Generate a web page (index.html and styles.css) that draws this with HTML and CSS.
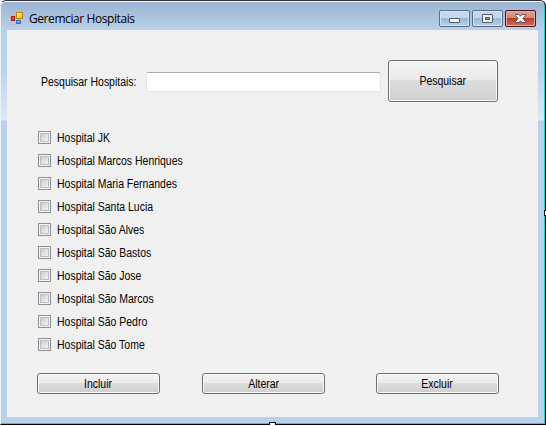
FILE: index.html
```html
<!DOCTYPE html>
<html lang="pt-BR">
<head>
<meta charset="utf-8">
<title>Geremciar Hospitais</title>
<link rel="stylesheet" href="styles.css">
</head>
<body>
<div class="window">
  <header class="titlebar">
    <svg class="app-icon" width="14" height="14" viewBox="0 0 14 14">
      <defs>
        <linearGradient id="y" x2="1" y2="1"><stop stop-color="#fff3a8"/><stop offset="1" stop-color="#efb20c"/></linearGradient>
        <linearGradient id="b" x2="0" y2="1"><stop stop-color="#8fb8f5"/><stop offset="1" stop-color="#3c78d8"/></linearGradient>
      </defs>
      <path d="M5 .5H.5v13H5" fill="none" stroke="#b9bfc8"/>
      <rect x="6.500" y="1.500" width="6" height="6" fill="url(#y)" stroke="#b98510"/>
      <rect x="1.500" y="5.500" width="3" height="4" fill="#e0463a" stroke="#a51c16"/>
      <rect x="6.500" y="9.500" width="4" height="3" fill="url(#b)" stroke="#3f70c0"/>
    </svg>
    <h1 class="title">Geremciar Hospitais</h1>
    <div class="controls">
      <span class="control"><svg width="29" height="15" viewBox="0 0 29 15"><rect x="9.500" y="7.500" width="10" height="4" rx=".5" fill="#f3f3f3" stroke="#50576a"/></svg></span>
      <span class="control"><svg width="29" height="15" viewBox="0 0 29 15"><rect x="9.500" y="3.500" width="10" height="8" rx=".5" fill="#f3f3f3" stroke="#50576a"/><rect x="12.500" y="6.500" width="4" height="2" fill="#8fb0d0" stroke="#50576a"/></svg></span>
      <span class="control close"><svg width="29" height="15" viewBox="0 0 29 15"><path d="M9.500 3.500h3.500l1.500 1.700 1.500-1.700h3.500v1L17 7.500l2.500 3v1H16l-1.500-1.700-1.500 1.700H9.500v-1l2.500-3-2.500-3z" fill="#f5f5f5" stroke="#5b4a5a"/></svg></span>
    </div>
  </header>
  <main class="client">
    <div class="search">
      <label class="search-label" for="q"><span class="text">Pesquisar Hospitais:</span></label>
      <input class="field" id="q" type="text">
      <button class="button large"><span class="text">Pesquisar</span></button>
    </div>
    <div class="list">
      <label class="item"><i class="box"></i><span class="text">Hospital JK</span></label>
      <label class="item"><i class="box"></i><span class="text">Hospital Marcos Henriques</span></label>
      <label class="item"><i class="box"></i><span class="text">Hospital Maria Fernandes</span></label>
      <label class="item"><i class="box"></i><span class="text">Hospital Santa Lucia</span></label>
      <label class="item"><i class="box"></i><span class="text">Hospital São Alves</span></label>
      <label class="item"><i class="box"></i><span class="text">Hospital São Bastos</span></label>
      <label class="item"><i class="box"></i><span class="text">Hospital São Jose</span></label>
      <label class="item"><i class="box"></i><span class="text">Hospital São Marcos</span></label>
      <label class="item"><i class="box"></i><span class="text">Hospital São Pedro</span></label>
      <label class="item"><i class="box"></i><span class="text">Hospital São Tome</span></label>
    </div>
    <div class="actions">
      <button class="button"><span class="text">Incluir</span></button>
      <button class="button"><span class="text">Alterar</span></button>
      <button class="button"><span class="text">Excluir</span></button>
    </div>
  </main>
  <i class="handle right"></i>
  <i class="handle bottom"></i>
</div>
</body>
</html>
```
FILE: styles.css
```css
* { box-sizing: border-box; }
body {
  margin: 0;
  background: #fff;
  font: 12px/15px "Liberation Sans", sans-serif;
  color: #000;
  overflow: hidden;
}
.window {
  position: relative;
  width: 546px;
  height: 425px;
  padding: 0 6px 6px 6px;
  border: 1px solid #000;
  border-left-color: #eef4fa;
  border-top-color: #333;
  border-radius: 6px 6px 0 0;
  background: linear-gradient(#98b3d2, #b9d1ea 29px, #bcd3ec 70px, #dce9f7 119px, #b9d1ea 120px);
  box-shadow: inset -1px -1px #2cc4e4, inset 0 1px #f4f8fc;
}
.titlebar {
  display: flex;
  align-items: center;
  height: 29px;
  padding: 5px 3px 0 3px;
}
.app-icon { margin-bottom: 1px; }
.title {
  margin: 2px 0 0 5px;
  font: 12px/16px "Open Sans", "Noto Sans", sans-serif;
  letter-spacing: -0.42px;
  white-space: nowrap;
}
.controls {
  display: flex;
  gap: 2px;
  margin-left: auto;
}
.control {
  width: 31px;
  height: 17px;
  border: 1px solid #5b6d89;
  border-radius: 2px;
  background: linear-gradient(#c4d8ed 50%, #9bb8d3 50%, #b7d2ea);
  box-shadow: inset 0 0 0 1px #d5e4f4;
}
.control svg { display: block; }
.close {
  border-color: #4b1622;
  background: linear-gradient(#dfa091, #d18775 50%, #b83d25 50%, #ce745c);
  box-shadow: inset 0 0 0 1px #e2a99c;
}
.client {
  height: 387px;
  width: 531px;
  padding: 29px 30px 0;
  background: #f0f0f0;
}
.text {
  display: inline-block;
  padding-top: 2px;
  transform: scaleX(.873);
  transform-origin: 0 50%;
  white-space: nowrap;
}
.search {
  display: flex;
  align-items: center;
  height: 44px;
}
.search-label { width: 109px; padding-left: 4px; }
.field {
  width: 235px;
  height: 20px;
  margin: 2px 7px 0 0;
  border: 1px solid #e2e3ea;
  border-top-color: #abadb3;
  border-radius: 2px;
  background: #fff;
}
.button {
  width: 123px;
  height: 21px;
  padding: 0;
  border: 1px solid #707070;
  border-radius: 3px;
  background: linear-gradient(#f2f2f2, #ebebeb 48%, #dddddd 48%, #cfcfcf);
  box-shadow: inset 0 0 0 1px #f7f7f7;
  font: inherit;
  color: #000;
}
.button .text { transform-origin: 50% 50%; }
.button.large { width: 110px; height: 42px; }
.large .text { padding-top: 0; }
.list { margin-top: 23px; }
.item {
  display: flex;
  align-items: center;
  height: 23px;
}
.box {
  width: 13px;
  height: 13px;
  margin: 0 6px 0 1px;
  border: 1px solid #8e8f8f;
  background: linear-gradient(135deg, #c6cad2, #f4f4f5) center / 7px 7px no-repeat content-box, #f6f6f6;
  box-shadow: inset 0 0 0 1px #f4f4f4, inset 0 0 0 2px #b9bdc5;
}
.actions {
  display: flex;
  gap: 51px;
  margin-top: 17px;
}
.actions .button { flex: none; }
.actions .button:nth-child(2) { margin-left: -9px; }
.handle {
  position: absolute;
  background: #fff;
  border: 1px solid #000;
}
.right { left: 543px; top: 209px; width: 4px; height: 6px; }
.bottom { left: 268px; top: 421px; width: 7px; height: 4px; }
```
